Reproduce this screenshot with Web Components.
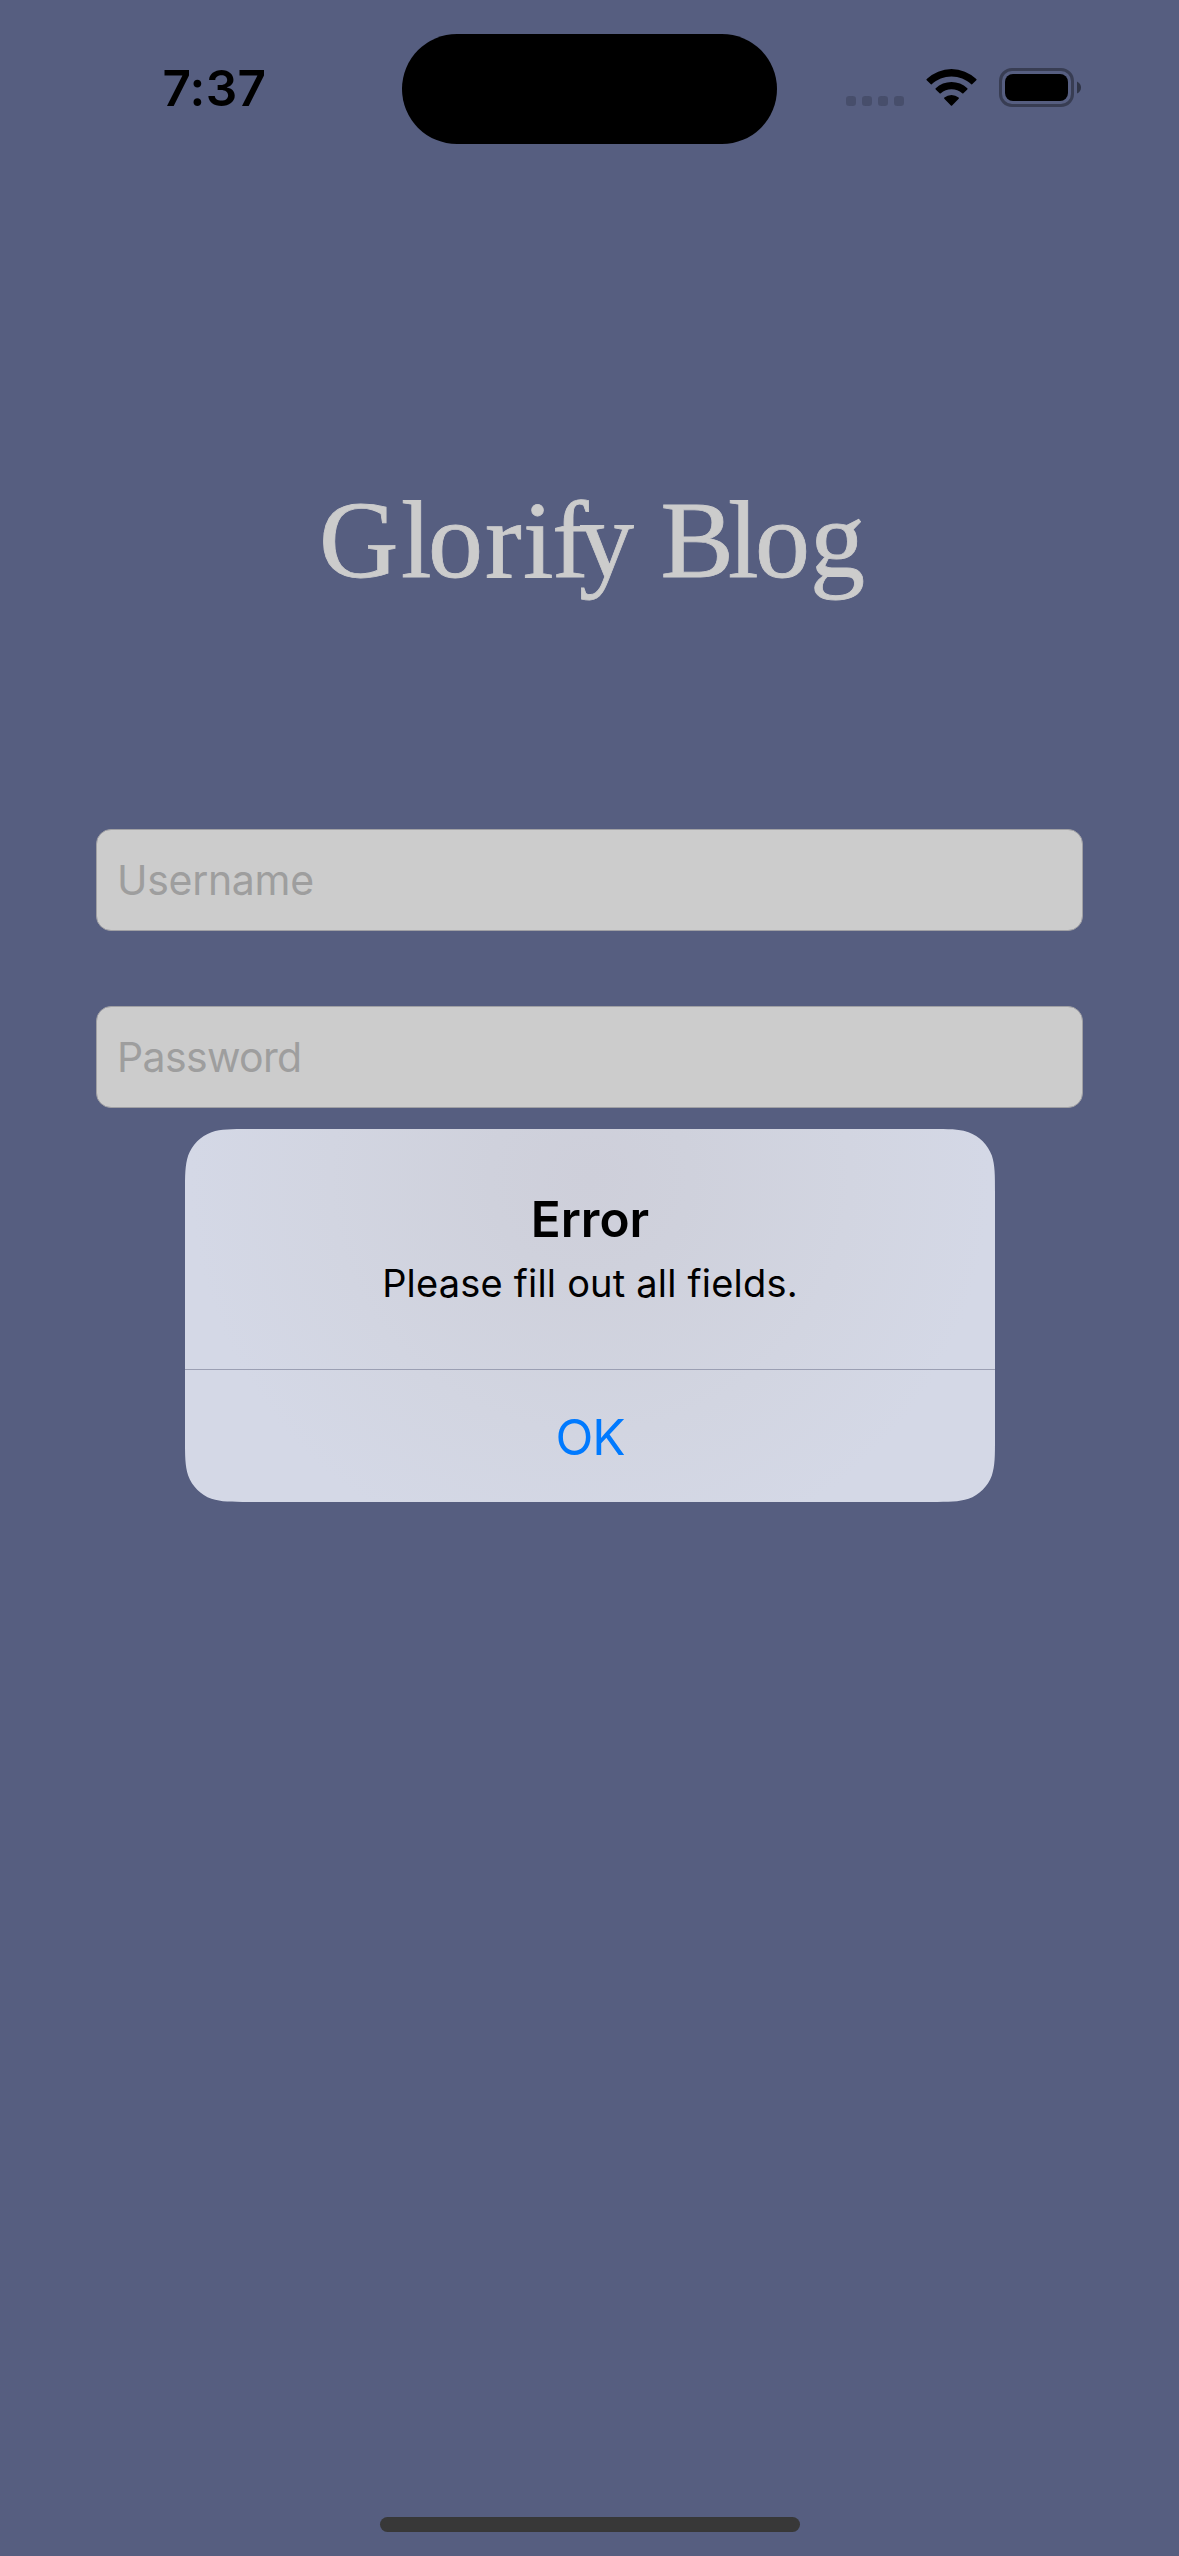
<!DOCTYPE html>
<html lang="en">
<head>
<meta charset="utf-8">
<title>Glorify Blog</title>
<style>
html, body { margin: 0; background: #565e80; }
body { width: 1179px; height: 2556px; overflow: hidden; font-family: Inter, "Liberation Sans", sans-serif; }
</style>
</head>
<body>
<login-screen>
  <status-bar slot="status">7:37</status-bar>
  <brand-title slot="title"></brand-title>
  <text-field slot="fields" style="--tracking:-.3px">Username</text-field>
  <text-field slot="fields" style="--tracking:-.65px">Password</text-field>
  <alert-dialog slot="overlay">
    <span slot="heading">Error</span>
    <span slot="message">Please fill out all fields.</span>
    <alert-action slot="action">OK</alert-action>
  </alert-dialog>
  <home-indicator slot="home"></home-indicator>
</login-screen>
<script>
const define = (name, html) => customElements.define(name, class extends HTMLElement {
  constructor() {
    super();
    this.attachShadow({ mode: 'open' }).innerHTML = html;
  }
});

define('login-screen', `
<style>
:host { display: flex; flex-direction: column; position: relative; width: 1179px; height: 2556px; background: #565e80; }
.title { margin-top: 293px; }
.fields { display: flex; flex-direction: column; gap: 75px; margin: 209px 96px 0; }
.spacer { flex: 1; }
.overlay { position: absolute; inset: 0; display: flex; justify-content: center; align-items: flex-start; padding: 1129px 0 0 1px; box-sizing: border-box; }
</style>
<slot name="status"></slot>
<div class="title"><slot name="title"></slot></div>
<div class="fields"><slot name="fields"></slot></div>
<div class="spacer"></div>
<slot name="home"></slot>
<div class="overlay"><slot name="overlay"></slot></div>`);

define('status-bar', `
<style>
:host { display: grid; grid-template-columns: 401.5px 375.5px 1fr; height: 177px; color: #000; }
.time { padding-left: 162.4px; font-size: 49.5px; font-weight: 600; line-height: 176px; letter-spacing: .3px; }
.island { margin-top: 33.5px; height: 110.5px; border-radius: 56px; background: #000; }
.icons { padding: 68px 0 0 69px; }
svg { display: block; }
</style>
<div class="time"><slot></slot></div>
<div class="island"></div>
<div class="icons">
<svg width="240" height="40" viewBox="846 68 240 40">
  <g fill="#474e6b"><rect x="846" y="96" width="10" height="10" rx="3.3"/><rect x="862" y="96" width="10" height="10" rx="3.3"/><rect x="878" y="96" width="10" height="10" rx="3.3"/><rect x="894" y="96" width="10" height="10" rx="3.3"/></g>
  <path d="M951.5 76.4C959 76.4 966 79.3 971.3 84.2Q971.9 84.7 972.4 84.1L976.3 80.2Q976.9 79.6 976.3 79A36 36 0 0 0 926.7 79Q926.1 79.6 926.7 80.2L930.6 84.1Q931.1 84.7 931.7 84.2C937 79.3 944 76.4 951.5 76.4Z"/>
  <path d="M951.5 89.2C955.5 89.2 959.3 90.7 962.2 93.3Q962.8 93.9 963.4 93.3L967.3 89.4Q967.9 88.8 967.3 88.2A23 23 0 0 0 935.7 88.2Q935.1 88.8 935.7 89.4L939.6 93.3Q940.2 93.9 940.8 93.3C943.7 90.7 947.5 89.2 951.5 89.2Z"/>
  <path d="M958.7 98.7Q959.3 98.1 958.6 97.5A11 11 0 0 0 944.4 97.5Q943.7 98.1 944.3 98.7L950.9 105.4Q951.5 106 952.1 105.4Z"/>
  <rect x="1000.5" y="69.5" width="72" height="36" rx="11.5" fill="none" stroke="#383d53" stroke-width="3"/>
  <rect x="1005" y="74" width="63" height="27" rx="8"/>
  <path fill="#2f3446" d="M1077 81.5Q1081 83.5 1081 87.5T1077 93.5Z"/>
</svg>
</div>`);

define('brand-title', `
<style>
:host { display: block; height: 150px; }
svg { display: block; font-family: "Liberation Serif", serif; font-size: 110px; }
text { stroke: #ccc; stroke-width: .8px; }
</style>
<svg width="1179" height="150" viewBox="0 0 1179 150">
  <text y="107" fill="#ccc" x="319 401 428 485 523 552 579 634 660.5 728 755 810">Glorify Blog</text>
</svg>`);

define('text-field', `
<style>
:host { display: block; box-sizing: border-box; height: 102px; border: 1px solid #a0a0a4; border-radius: 15px; background: #ccc; color: #9e9e9e; padding-left: 20px; font-size: 41px; line-height: 100px; letter-spacing: var(--tracking, 0); }
</style>
<slot></slot>`);

define('alert-dialog', `
<style>
:host {
  display: flex; flex-direction: column; width: 810px; height: 373px; color: #000; text-align: center;
  background: radial-gradient(ellipse 400px 390px at 405px 50px, #cecfda 0, #cfd1dc 25%, #d2d5e1 65%, #d4d8e6 100%);
  clip-path: path("M64.2 0H745.8C764.3 0 773.5 0 781.9 2.75L783.5 3.15C794.3 7.1 802.9 15.7 806.85 26.5C810 36.5 810 45.7 810 64.2V308.8C810 327.3 810 336.5 806.85 346.5C802.9 357.3 794.3 365.9 783.5 369.85C773.5 373 764.3 373 745.8 373H64.2C45.7 373 36.5 373 26.5 369.85C15.7 365.9 7.1 357.3 3.15 346.5C0 336.5 0 327.3 0 308.8V64.2C0 45.7 0 36.5 3.15 26.5C7.1 15.7 15.7 7.1 26.5 3.15C36.5 0 45.7 0 64.2 0Z");
}
.body { flex: none; box-sizing: border-box; height: 241px; padding-top: 60px; border-bottom: 1px solid #9b9fb3; }
.heading { font-size: 49.5px; font-weight: 600; line-height: 60px; }
.message { font-size: 38px; line-height: 48px; margin-top: 10px; letter-spacing: .2px; }
</style>
<div class="body">
  <div class="heading"><slot name="heading"></slot></div>
  <div class="message"><slot name="message"></slot></div>
</div>
<slot name="action"></slot>`);

define('alert-action', `
<style>
:host { display: block; flex: none; height: 132px; font-size: 49.5px; line-height: 134px; color: #007aff; letter-spacing: -1px; }
</style>
<slot></slot>`);

define('home-indicator', `
<style>
:host { display: block; width: 420px; height: 15px; border-radius: 8px; background: #383838; margin: 0 auto 24px 380px; }
</style>`);
</script>
</body>
</html>
